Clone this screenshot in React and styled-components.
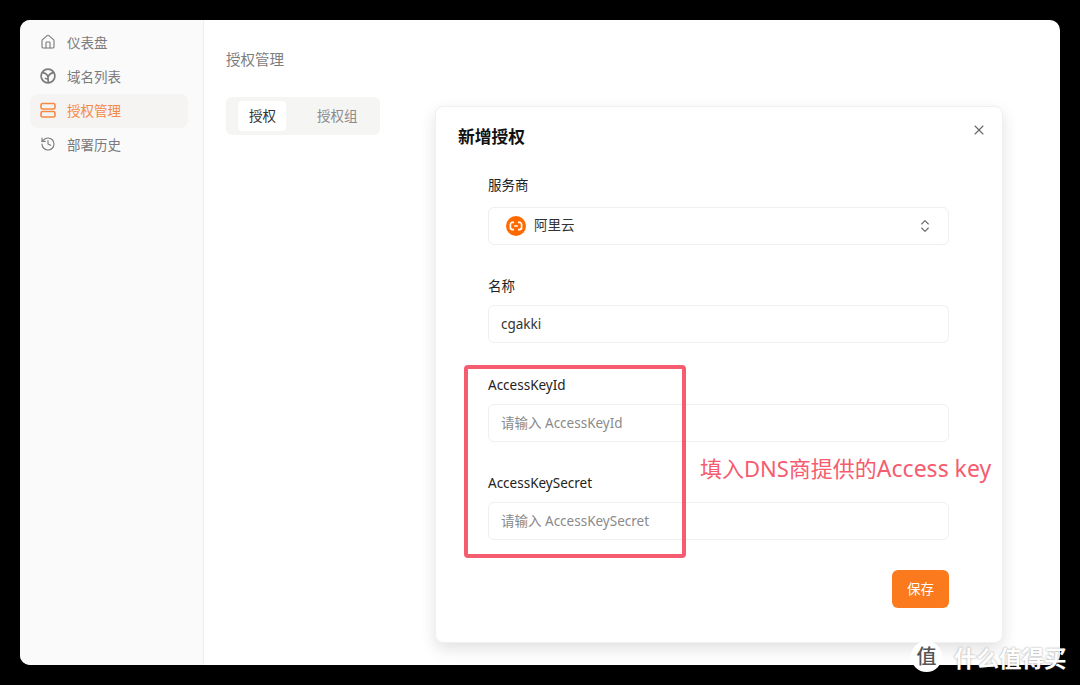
import React from 'react';
import styled, { createGlobalStyle } from 'styled-components';
import { House, History, X, ChevronsUpDown } from 'lucide-react';

const Global = createGlobalStyle`
  html, body { margin: 0; padding: 0; background: #000; }
  body { font-family: "Noto Sans", "Noto Sans CJK SC", sans-serif; }
  * { box-sizing: border-box; }
`;
const Page = styled.div`
  position: relative;
  width: 1080px;
  height: 685px;
  padding: 20px;
  background: #000;
  overflow: hidden;
`;
const Win = styled.div`
  display: flex;
  width: 1040px;
  height: 645px;
  background: #fff;
  border-radius: 10px;
  overflow: hidden;
`;
const Sidebar = styled.nav`
  width: 184px;
  flex: none;
  padding: 6px 15px 0 10px;
  background: #fafafa;
  border-right: 1px solid #efefef;
  display: flex;
  flex-direction: column;
`;
const NavItem = styled.div`
  display: flex;
  align-items: center;
  gap: 11px;
  height: 34px;
  padding: 0 0 2px 10px;
  border-radius: 8px;
  font-size: 13.5px;
  background: ${p => (p.$active ? '#f5f4f3' : 'transparent')};
  color: ${p => (p.$active ? '#f48a45' : '#7b7b7b')};
  svg { flex: none; }
`;
const Main = styled.main`
  flex: 1;
  padding: 27px 0 0 22px;
`;
const Heading = styled.div`
  font-size: 14.5px;
  line-height: 24px;
  color: #7d7d7d;
`;
const Tabs = styled.div`
  display: inline-flex;
  margin-top: 26px;
  padding: 4px 12px;
  gap: 20px;
  height: 38px;
  width: 154px;
  background: #f5f5f4;
  border-radius: 6px;
`;
const Tab = styled.div`
  height: 30px;
  padding: ${p => (p.$active ? '0 10px 0 11px' : '0 0 0 11px')};
  border-radius: 4px;
  font-size: 13.5px;
  line-height: 31px;
  white-space: nowrap;
  background: ${p => (p.$active ? '#fff' : 'transparent')};
  color: ${p => (p.$active ? '#333' : '#8b8b8b')};
`;
const Modal = styled.section`
  position: absolute;
  left: 435px;
  top: 106px;
  width: 568px;
  height: 537px;
  padding: 16px 53px 0 22px;
  background: #fff;
  border: 1px solid #f0f0f0;
  border-radius: 8px;
  box-shadow: 0 6px 16px rgba(0, 0, 0, 0.12);
`;
const Close = styled.div`
  position: absolute;
  top: 15px;
  right: 15px;
  display: flex;
  color: #666;
`;
const Title = styled.h2`
  margin: 0;
  font-size: 16.75px;
  font-weight: 700;
  line-height: 28px;
  color: #111;
`;
const Form = styled.div`
  margin-top: 23px;
  margin-left: 30px;
  display: flex;
  flex-direction: column;
  gap: 30px;
`;
const Field = styled.div`
  display: flex;
  flex-direction: column;
  gap: 8px;
`;
const Label = styled.label`
  font-size: 13.5px;
  line-height: 22px;
  color: #222;
  margin-top: ${p => p.$top || 0}px;
  margin-bottom: ${p => p.$bottom || 0}px;
`;
const Control = styled.div`
  height: 38px;
  padding: 0 12px ${p => (p.$placeholder ? 2 : 0)}px;
  display: flex;
  align-items: center;
  border: 1px solid #efefef;
  border-radius: 6px;
  background: #fff;
  font-size: 13.5px;
  color: ${p => (p.$placeholder ? '#8a8a8a' : '#333')};
`;
const SelectControl = styled(Control)`
  padding: 0 16px 4px 17px;
  gap: 8px;
  justify-content: flex-start;
  svg { margin-top: 4px; }
  svg.chev { margin-left: auto; color: #666; margin-right: -1px; }
`;
const Actions = styled.div`
  display: flex;
  justify-content: flex-end;
`;
const Save = styled.button`
  width: 57px;
  height: 38px;
  padding: 0 0 2px;
  border: none;
  border-radius: 6px;
  background: #fb7a1e;
  color: #fff;
  font: 13.5px "Noto Sans CJK SC", sans-serif;
`;
const Highlight = styled.div`
  position: absolute;
  left: 464px;
  top: 365px;
  width: 222px;
  height: 193px;
  border: 4px solid #f65c6f;
  border-radius: 4px;
  pointer-events: none;
`;
const Note = styled.div`
  position: absolute;
  left: 700px;
  top: 452px;
  font-size: 22px;
  line-height: 32px;
  color: #f65c6f;
  white-space: nowrap;
`;
const NoteLatin = styled.span`
  font-size: 23px;
`;
const Mark = styled.div`
  position: absolute;
  left: 911px;
  top: 641px;
  display: flex;
  align-items: center;
  gap: 12px;
`;
const MarkBadge = styled.div`
  width: 31px;
  height: 31px;
  border-radius: 50%;
  background: #fff;
  color: #555;
  font: 500 20px/30px "Noto Sans CJK SC", sans-serif;
  text-align: center;
`;
const MarkText = styled.div`
  font: 700 22.5px/30px "Noto Sans CJK SC", sans-serif;
  color: #fff;
  text-shadow: 0 0 2px rgba(60, 60, 60, 0.55);
  white-space: nowrap;
`;

const GlobeIcon = () => (
  <svg width="16" height="16" viewBox="0 0 16 16" fill="none" stroke="currentColor" strokeWidth="1.7" strokeLinecap="round">
    <circle cx="8" cy="8" r="6.9" />
    <path d="M2.6 4.6c2 .3 3.9 1.3 4.9 2.9.6 1 .5 1.9.5 2.9 0 1.200 0 2.400.4 3.700" />
    <path d="M8.300 8.400c1-1.900 3-3.500 5.100-3.800" />
    <path d="M5.400 10.400c.8.500 1.700.700 2.600.700" />
  </svg>
);
const ServerIcon = () => (
  <svg width="16" height="16" viewBox="0 0 16 16" fill="none" stroke="currentColor" strokeWidth="1.6">
    <rect x="1" y="1.5" width="14" height="5.5" rx="1.6" />
    <rect x="1" y="9.5" width="14" height="5.5" rx="1.6" />
  </svg>
);
const AliIcon = () => (
  <svg width="20" height="20" viewBox="0 0 20 20">
    <circle cx="10" cy="10" r="10" fill="#ff6a00" />
    <path d="M8 6.400H6.400a2 2 0 0 0-2 2v3.200a2 2 0 0 0 2 2H8M12 6.400h1.600a2 2 0 0 1 2 2v3.200a2 2 0 0 1-2 2H12M8.200 10h3.600" fill="none" stroke="#fff" strokeWidth="1.700" />
  </svg>
);

export default function App() {
  return (
    <Page>
      <Global />
      <Win>
        <Sidebar>
          <NavItem><House size={16} strokeWidth={1.7} />仪表盘</NavItem>
          <NavItem><GlobeIcon />域名列表</NavItem>
          <NavItem $active><ServerIcon />授权管理</NavItem>
          <NavItem><History size={16} strokeWidth={1.7} />部署历史</NavItem>
        </Sidebar>
        <Main>
          <Heading>授权管理</Heading>
          <Tabs>
            <Tab $active>授权</Tab>
            <Tab>授权组</Tab>
          </Tabs>
        </Main>
      </Win>
      <Modal>
        <Close><X size={16} strokeWidth={1.6} /></Close>
        <Title>新增授权</Title>
        <Form>
          <Field>
            <Label $bottom={3}>服务商</Label>
            <SelectControl><AliIcon />阿里云<ChevronsUpDown className="chev" size={16} strokeWidth={1.6} /></SelectControl>
          </Field>
          <Field>
            <Label>名称</Label>
            <Control>cgakki</Control>
          </Field>
          <Field>
            <Label $top={1}>AccessKeyId</Label>
            <Control $placeholder>请输入 AccessKeyId</Control>
          </Field>
          <Field>
            <Label>AccessKeySecret</Label>
            <Control $placeholder>请输入 AccessKeySecret</Control>
          </Field>
          <Actions><Save>保存</Save></Actions>
        </Form>
      </Modal>
      <Highlight />
      <Note>填入DNS商提供的<NoteLatin>Access key</NoteLatin></Note>
      <Mark>
        <MarkBadge>值</MarkBadge>
        <MarkText>什么值得买</MarkText>
      </Mark>
    </Page>
  );
}
